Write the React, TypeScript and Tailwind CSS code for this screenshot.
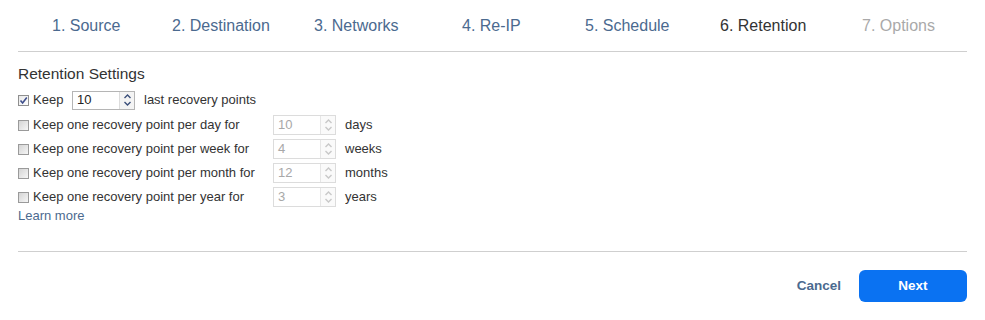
import React from "react";

const tabs = [
  { label: "1. Source", x: 52, state: "done" },
  { label: "2. Destination", x: 172, state: "done" },
  { label: "3. Networks", x: 314, state: "done" },
  { label: "4. Re-IP", x: 462, state: "done" },
  { label: "5. Schedule", x: 585, state: "done" },
  { label: "6. Retention", x: 720, state: "active" },
  { label: "7. Options", x: 862, state: "todo" },
];

function Checkbox({ checked }: { checked?: boolean }) {
  return (
    <span
      className={
        "inline-flex w-[11px] h-[11px] border items-center justify-center shrink-0 " +
        (checked
          ? "border-[#8f8f8f] bg-gradient-to-br from-[#e8e8e8] to-[#ffffff]"
          : "border-[#9a9a9a] bg-gradient-to-br from-[#d4d4d4] to-[#f6f6f6]")
      }
    >
      {checked && (
        <svg width="9" height="9" viewBox="0 0 9 9">
          <path d="M1.5 4.5 L3.6 7 L7.8 1.5" stroke="#3f4f8c" strokeWidth="1.6" fill="none" />
        </svg>
      )}
    </span>
  );
}

function Spinner({ value, disabled }: { value: string; disabled?: boolean }) {
  const c = disabled ? "#c8c8c8" : "#3b4f7a";
  return (
    <div
      className={
        "flex border shrink-0 w-[63px] " +
        (disabled ? "border-[#dcdcdc] h-[20px]" : "border-[#b5b5b5] h-[19px]")
      }
    >
      <div
        className={
          "flex-1 pl-[4px] flex items-center text-[13px] " +
          (disabled ? "text-[#a8a8a8]" : "text-[#222]")
        }
      >
        {value}
      </div>
      <div
        className={
          "w-[15px] flex flex-col items-center justify-center border-l " +
          (disabled ? "border-[#e6e6e6] bg-[#fafafa]" : "border-[#dcdcdc] bg-[#f4f4f4]")
        }
      >
        <svg width="9" height="14" viewBox="0 0 9 14">
          <path d="M1.5 5 L4.5 2 L7.5 5" stroke={c} strokeWidth="1.4" fill="none" />
          <path d="M1.5 9 L4.5 12 L7.5 9" stroke={c} strokeWidth="1.4" fill="none" />
        </svg>
      </div>
    </div>
  );
}

const rows = [
  { label: "Keep one recovery point per day for", value: "10", unit: "days" },
  { label: "Keep one recovery point per week for", value: "4", unit: "weeks" },
  { label: "Keep one recovery point per month for", value: "12", unit: "months" },
  { label: "Keep one recovery point per year for", value: "3", unit: "years" },
];

export default function App() {
  return (
    <div
      className="w-[985px] h-[320px] bg-white text-[#333]"
      style={{ fontFamily: '"Liberation Sans", Arial, sans-serif' }}
    >
      <div className="px-[18px]">
        <div className="relative h-[52px] border-b border-[#cfcfcf]">
          {tabs.map((t) => (
            <span
              key={t.label}
              className={
                "absolute top-[16px] text-[16px] leading-[20px] whitespace-nowrap " +
                (t.state === "active"
                  ? "text-[#333333]"
                  : t.state === "todo"
                  ? "text-[#a9a9a9]"
                  : "text-[#4b6a8f]")
              }
              style={{ left: t.x - 18 }}
            >
              {t.label}
            </span>
          ))}
        </div>

        <div className="pt-[12px] h-[200px] border-b border-[#cfcfcf]">
          <div className="text-[15.5px] leading-[20px] text-[#333]">Retention Settings</div>
          <div className="flex items-center h-[22px] mt-[5px] text-[13px]">
            <Checkbox checked />
            <span className="ml-[4px] w-[39px] shrink-0">Keep</span>
            <Spinner value="10" />
            <span className="ml-[9px]">last recovery points</span>
          </div>
          <div className="flex flex-col gap-[4px] mt-[4px]">
            {rows.map((r) => (
              <div key={r.unit} className="flex items-center h-[20px] text-[13px]">
                <Checkbox />
                <span className="ml-[4px] w-[240px] shrink-0">{r.label}</span>
                <Spinner value={r.value} disabled />
                <span className="ml-[9px]">{r.unit}</span>
              </div>
            ))}
          </div>
          <div className="text-[13px] text-[#4b6a8f] mt-[1px] leading-[16px]">Learn more</div>
        </div>

        <div className="flex justify-end items-center mt-[18px] gap-[18px]">
          <span className="text-[13.5px] font-bold text-[#4b6a8f]">Cancel</span>
          <button className="w-[108px] h-[32px] rounded-[6px] bg-[#0a72f2] text-white text-[13.5px] font-bold">
            Next
          </button>
        </div>
      </div>
    </div>
  );
}
